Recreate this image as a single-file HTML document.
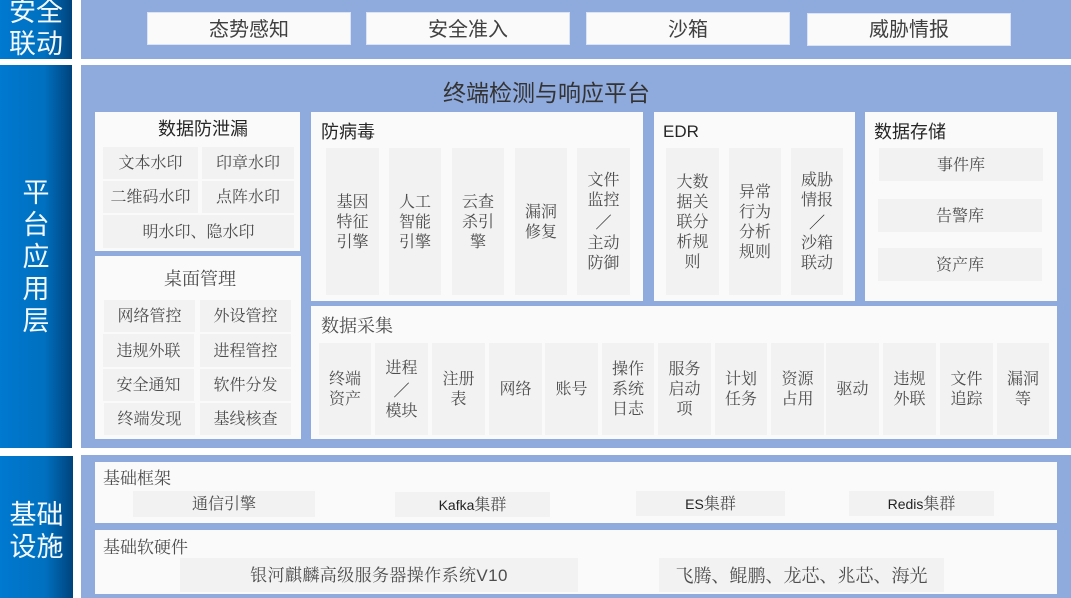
<!DOCTYPE html>
<html lang="zh"><head><meta charset="utf-8"><title>终端检测与响应平台</title>
<style>
html,body{margin:0;padding:0;background:#fff}
body{position:relative;width:1071px;height:598px;overflow:hidden;font-family:"Liberation Sans","Noto Serif CJK SC",serif;color:#4d4d4d}
.a{position:absolute;box-sizing:border-box}
.bar{left:0;width:72px;background:linear-gradient(90deg,#0079d0 0%,#0070bf 62%,#00437c 100%);color:#f4f8fc;font-family:"Liberation Sans","Noto Sans CJK SC",sans-serif;font-weight:400;font-size:27px;line-height:32px;display:flex;align-items:center;justify-content:center;text-align:center}
.bg{left:81px;width:990px;background:#8faadc}
.card{background:#fafafa}
.c{background:#f2f2f2;display:flex;align-items:center;justify-content:center;text-align:center;font-size:16px;line-height:20px;padding-top:2px}
.top{background:#fafafa;border:1px solid #dbe4f4;display:flex;align-items:center;justify-content:center;font-size:20px;font-family:"Liberation Sans","Noto Sans CJK SC",sans-serif;font-weight:400;color:#404040}
.t{white-space:nowrap;font-size:18px;line-height:24px}
.s{font-family:"Liberation Sans","Noto Sans CJK SC",sans-serif;color:#262626}
.k{font-family:"Liberation Sans","Noto Sans CJK SC",sans-serif;color:#222;font-size:14px}
.x{font-family:"Noto Sans CJK SC",sans-serif;color:#222}
</style></head><body>

<div class="a bar" style="top:-3px;height:62px">安全<br>联动</div>
<div class="a bar" style="top:65px;height:383px">平<br>台<br>应<br>用<br>层</div>
<div class="a bar" style="top:456px;height:142px;width:73px;padding-top:7px">基础<br>设施</div>

<div class="a bg" style="top:0;height:59px"></div>
<div class="a bg" style="top:65px;height:383px"></div>
<div class="a bg" style="top:455px;height:143px"></div>

<div class="a top" style="left:147px;top:12px;width:204px;height:33px;padding-bottom:2px">态势感知</div>
<div class="a top" style="left:366px;top:12px;width:204px;height:33px;padding-bottom:2px">安全准入</div>
<div class="a top" style="left:586px;top:12px;width:204px;height:33px;padding-bottom:2px">沙箱</div>
<div class="a top" style="left:807px;top:13px;width:204px;height:33px;padding-bottom:4px">威胁情报</div>

<div class="a t" style="left:443px;top:78px;font-size:23px;line-height:30px;font-family:'Liberation Sans','Noto Sans CJK SC',sans-serif;color:#333">终端检测与响应平台</div>

<!-- 数据防泄漏 -->
<div class="a card" style="left:95px;top:112px;width:205px;height:139px"></div>
<div class="a t s" style="left:158px;top:117px">数据防泄漏</div>
<div class="a c" style="left:103px;top:147px;width:95px;height:32px">文本水印</div>
<div class="a c" style="left:202px;top:147px;width:92px;height:32px">印章水印</div>
<div class="a c" style="left:103px;top:181px;width:95px;height:32px">二维码水印</div>
<div class="a c" style="left:202px;top:181px;width:92px;height:32px">点阵水印</div>
<div class="a c" style="left:103px;top:215px;width:191px;height:33px">明水印、隐水印</div>

<!-- 桌面管理 -->
<div class="a card" style="left:95px;top:256px;width:206px;height:183px"></div>
<div class="a t" style="left:164px;top:267px">桌面管理</div>
<div class="a c" style="left:104px;top:300px;width:91px;height:32px">网络管控</div>
<div class="a c" style="left:200px;top:300px;width:91px;height:32px">外设管控</div>
<div class="a c" style="left:103px;top:334px;width:91px;height:33px">违规外联</div>
<div class="a c" style="left:200px;top:334px;width:91px;height:33px">进程管控</div>
<div class="a c" style="left:103px;top:369px;width:91px;height:32px">安全通知</div>
<div class="a c" style="left:200px;top:369px;width:91px;height:32px">软件分发</div>
<div class="a c" style="left:104px;top:403px;width:91px;height:32px">终端发现</div>
<div class="a c" style="left:200px;top:403px;width:91px;height:32px">基线核查</div>

<!-- 防病毒 -->
<div class="a card" style="left:311px;top:112px;width:332px;height:189px"></div>
<div class="a t s" style="left:321px;top:120px">防病毒</div>
<div class="a c" style="left:326px;top:148px;width:53px;height:147px">基因<br>特征<br>引擎</div>
<div class="a c" style="left:389px;top:148px;width:52px;height:147px">人工<br>智能<br>引擎</div>
<div class="a c" style="left:452px;top:148px;width:52px;height:147px">云查<br>杀引<br>擎</div>
<div class="a c" style="left:515px;top:148px;width:52px;height:147px">漏洞<br>修复</div>
<div class="a c" style="left:577px;top:148px;width:53px;height:147px"><span>文件<br>监控<br><span class="x">／</span><br>主动<br>防御</span></div>

<!-- EDR -->
<div class="a card" style="left:654px;top:112px;width:201px;height:189px"></div>
<div class="a t s" style="left:663px;top:120px;font-size:17px">EDR</div>
<div class="a c" style="left:666px;top:148px;width:53px;height:147px">大数<br>据关<br>联分<br>析规<br>则</div>
<div class="a c" style="left:729px;top:148px;width:52px;height:147px">异常<br>行为<br>分析<br>规则</div>
<div class="a c" style="left:791px;top:148px;width:52px;height:147px"><span>威胁<br>情报<br><span class="x">／</span><br>沙箱<br>联动</span></div>

<!-- 数据存储 -->
<div class="a card" style="left:865px;top:112px;width:192px;height:189px"></div>
<div class="a t s" style="left:874px;top:120px">数据存储</div>
<div class="a c" style="left:879px;top:148px;width:164px;height:33px">事件库</div>
<div class="a c" style="left:878px;top:199px;width:164px;height:33px">告警库</div>
<div class="a c" style="left:878px;top:248px;width:164px;height:33px">资产库</div>

<!-- 数据采集 -->
<div class="a card" style="left:311px;top:306px;width:746px;height:133px"></div>
<div class="a t" style="left:321px;top:314px">数据采集</div>
<div class="a c" style="left:319px;top:343px;width:52px;height:92px">终端<br>资产</div>
<div class="a c" style="left:375px;top:343px;width:53px;height:92px"><span>进程<br><span class="x">／</span><br>模块</span></div>
<div class="a c" style="left:432px;top:343px;width:53px;height:92px">注册<br>表</div>
<div class="a c" style="left:489px;top:343px;width:53px;height:92px">网络</div>
<div class="a c" style="left:545px;top:343px;width:53px;height:92px">账号</div>
<div class="a c" style="left:602px;top:343px;width:52px;height:92px">操作<br>系统<br>日志</div>
<div class="a c" style="left:658px;top:343px;width:53px;height:92px">服务<br>启动<br>项</div>
<div class="a c" style="left:715px;top:343px;width:52px;height:92px">计划<br>任务</div>
<div class="a c" style="left:771px;top:343px;width:53px;height:92px">资源<br>占用</div>
<div class="a c" style="left:826px;top:343px;width:53px;height:92px">驱动</div>
<div class="a c" style="left:883px;top:343px;width:53px;height:92px">违规<br>外联</div>
<div class="a c" style="left:940px;top:343px;width:53px;height:92px">文件<br>追踪</div>
<div class="a c" style="left:997px;top:343px;width:52px;height:92px">漏洞<br>等</div>

<!-- 基础框架 -->
<div class="a card" style="left:95px;top:462px;width:962px;height:61px"></div>
<div class="a t" style="left:103px;top:468px;font-size:17px;line-height:22px">基础框架</div>
<div class="a c" style="left:133px;top:491px;width:182px;height:26px">通信引擎</div>
<div class="a c" style="left:395px;top:492px;width:155px;height:25px"><span><span class="k">Kafka</span>集群</span></div>
<div class="a c" style="left:636px;top:491px;width:149px;height:25px"><span><span class="k">ES</span>集群</span></div>
<div class="a c" style="left:849px;top:491px;width:145px;height:25px"><span><span class="k">Redis</span>集群</span></div>

<!-- 基础软硬件 -->
<div class="a card" style="left:95px;top:530px;width:962px;height:64px"></div>
<div class="a t" style="left:103px;top:537px;font-size:17px;line-height:22px">基础软硬件</div>
<div class="a c" style="left:180px;top:558px;width:398px;height:34px;font-size:17px;letter-spacing:.4px">银河麒麟高级服务器操作系统V10</div>
<div class="a c" style="left:659px;top:558px;width:285px;height:34px;font-size:18px">飞腾、鲲鹏、龙芯、兆芯、海光</div>

</body></html>
